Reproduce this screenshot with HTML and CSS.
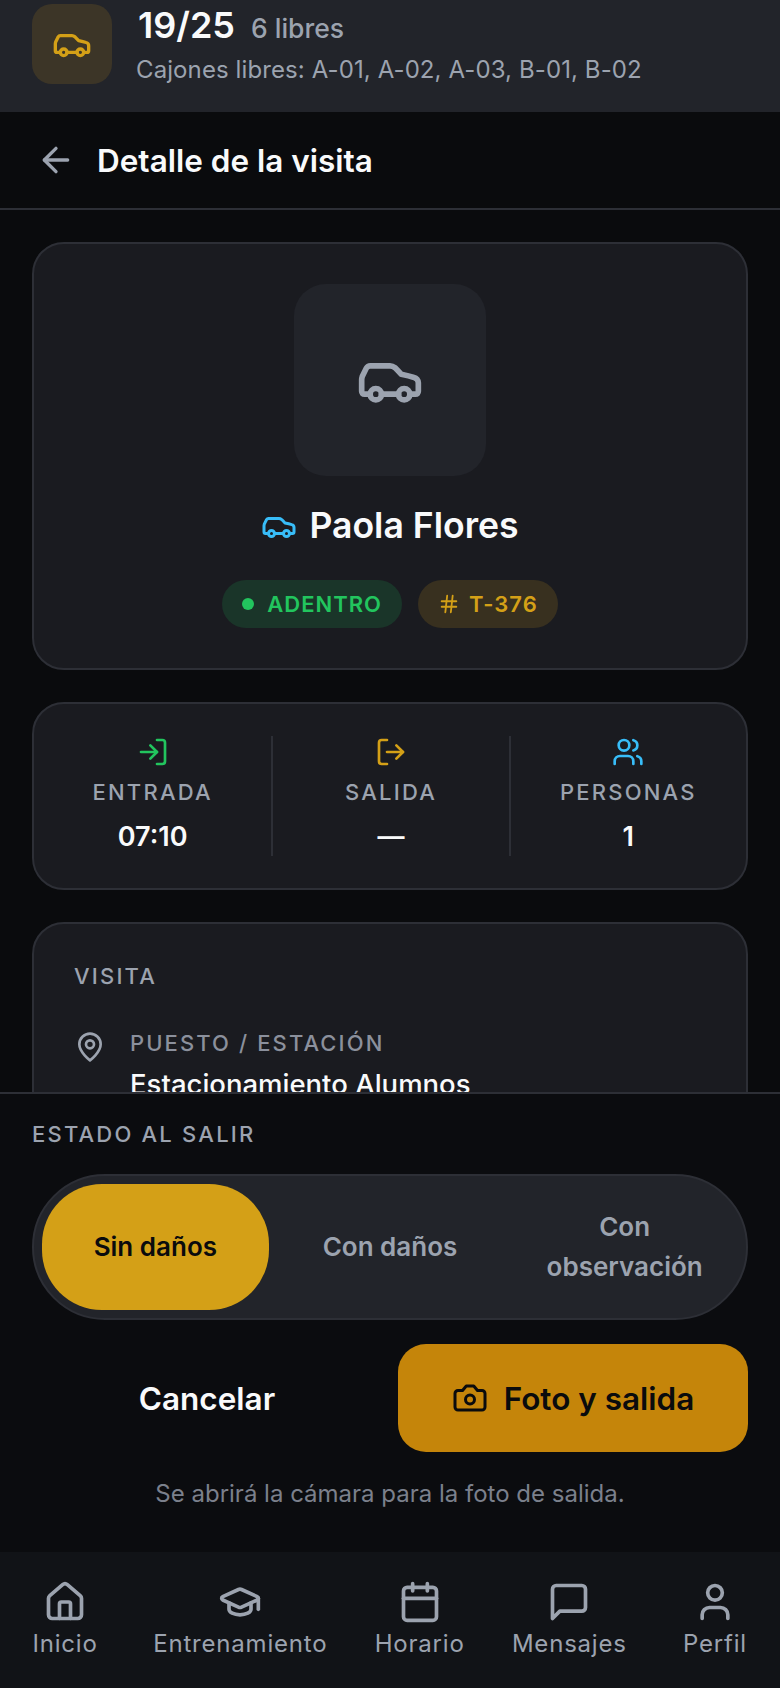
FILE: index.html
```
<!DOCTYPE html>
<html lang="es">

<head>
    <meta charset="UTF-8">
    <meta name="viewport" content="width=device-width, initial-scale=1.0">
    <title>Detalle de la visita</title>
    <link rel="stylesheet" href="styles.css">
</head>

<body>
    <svg class="sprites" width="0" height="0">
        <symbol id="i-car" viewBox="0 0 24 24"><path d="M19 17h2c.6 0 1-.4 1-1v-3c0-.9-.7-1.7-1.5-1.9C18.7 10.6 16 10 16 10s-1.3-1.4-2.2-2.3c-.5-.4-1.1-.7-1.8-.7H5c-.6 0-1.1.4-1.4.9l-1.4 2.9A3.7 3.7 0 0 0 2 12v4c0 .6.4 1 1 1h2"/><circle cx="7" cy="17" r="2"/><path d="M9 17h6"/><circle cx="17" cy="17" r="2"/></symbol>
        <symbol id="i-back" viewBox="0 0 24 24"><path d="m12 19-7-7 7-7"/><path d="M19 12H5"/></symbol>
        <symbol id="i-hash" viewBox="0 0 24 24"><path d="M4 9h16"/><path d="M4 15h16"/><path d="M10 3 8 21"/><path d="M16 3l-2 18"/></symbol>
        <symbol id="i-login" viewBox="0 0 24 24"><path d="M15 3h4a2 2 0 0 1 2 2v14a2 2 0 0 1-2 2h-4"/><path d="m10 17 5-5-5-5"/><path d="M15 12H3"/></symbol>
        <symbol id="i-logout" viewBox="0 0 24 24"><path d="M9 21H5a2 2 0 0 1-2-2V5a2 2 0 0 1 2-2h4"/><path d="m16 17 5-5-5-5"/><path d="M21 12H9"/></symbol>
        <symbol id="i-users" viewBox="0 0 24 24"><path d="M16 21v-2a4 4 0 0 0-4-4H6a4 4 0 0 0-4 4v2"/><circle cx="9" cy="7" r="4"/><path d="M22 21v-2a4 4 0 0 0-3-3.87"/><path d="M16 3.13a4 4 0 0 1 0 7.75"/></symbol>
        <symbol id="i-pin" viewBox="0 0 24 24"><path d="M20 10c0 6-8 12-8 12s-8-6-8-12a8 8 0 0 1 16 0Z"/><circle cx="12" cy="10" r="3"/></symbol>
        <symbol id="i-camera" viewBox="0 0 24 24"><path d="M14.5 4h-5L7 7H4a2 2 0 0 0-2 2v9a2 2 0 0 0 2 2h16a2 2 0 0 0 2-2V9a2 2 0 0 0-2-2h-3l-2.5-3z"/><circle cx="12" cy="13" r="3"/></symbol>
        <symbol id="i-home" viewBox="0 0 24 24"><path d="M15 21v-8a1 1 0 0 0-1-1h-4a1 1 0 0 0-1 1v8"/><path d="M3 10a2 2 0 0 1 .709-1.528l7-5.999a2 2 0 0 1 2.582 0l7 5.999A2 2 0 0 1 21 10v9a2 2 0 0 1-2 2H5a2 2 0 0 1-2-2z"/></symbol>
        <symbol id="i-cap" viewBox="0 0 24 24"><path d="M21.42 10.922a1 1 0 0 0-.019-1.838L12.83 5.18a2 2 0 0 0-1.66 0L2.6 9.08a1 1 0 0 0 0 1.832l8.57 3.908a2 2 0 0 0 1.66 0z"/><path d="M22 10v6"/><path d="M6 12.5V16a6 3 0 0 0 12 0v-3.5"/></symbol>
        <symbol id="i-calendar" viewBox="0 0 24 24"><path d="M8 2v4"/><path d="M16 2v4"/><rect x="3" y="4" width="18" height="18" rx="2"/><path d="M3 10h18"/></symbol>
        <symbol id="i-message" viewBox="0 0 24 24"><path d="M21 15a2 2 0 0 1-2 2H7l-4 4V5a2 2 0 0 1 2-2h14a2 2 0 0 1 2 2z"/></symbol>
        <symbol id="i-user" viewBox="0 0 24 24"><path d="M19 21v-2a4 4 0 0 0-4-4H9a4 4 0 0 0-4 4v2"/><circle cx="12" cy="7" r="4"/></symbol>
    </svg>

    <div class="app">
        <div class="parking-bar">
            <div class="parking-icon"><svg class="icon icon-40"><use href="#i-car"/></svg></div>
            <div class="parking-info">
                <div class="parking-count"><strong>19/25</strong><span>6 libres</span></div>
                <div class="parking-free">Cajones libres: A-01, A-02, A-03, B-01, B-02</div>
            </div>
        </div>

        <header class="page-header">
            <svg class="icon icon-40 back-icon"><use href="#i-back"/></svg>
            <h1>Detalle de la visita</h1>
        </header>

        <main class="content">
            <section class="card profile-card">
                <div class="avatar"><svg class="icon icon-68"><use href="#i-car"/></svg></div>
                <div class="visitor-name">
                    <svg class="icon icon-36 blue"><use href="#i-car"/></svg>
                    <span>Paola Flores</span>
                </div>
                <div class="pills">
                    <span class="pill pill-green"><i class="dot"></i>ADENTRO</span>
                    <span class="pill pill-amber"><svg class="icon icon-22"><use href="#i-hash"/></svg>T-376</span>
                </div>
            </section>

            <section class="card stats-card">
                <div class="stat">
                    <svg class="icon icon-32 green"><use href="#i-login"/></svg>
                    <div class="stat-label">ENTRADA</div>
                    <div class="stat-value">07:10</div>
                </div>
                <div class="stat">
                    <svg class="icon icon-32 amber"><use href="#i-logout"/></svg>
                    <div class="stat-label">SALIDA</div>
                    <div class="stat-value">—</div>
                </div>
                <div class="stat">
                    <svg class="icon icon-32 blue"><use href="#i-users"/></svg>
                    <div class="stat-label">PERSONAS</div>
                    <div class="stat-value">1</div>
                </div>
            </section>

            <section class="card visit-card">
                <div class="section-title">VISITA</div>
                <div class="info-row">
                    <svg class="icon icon-32 gray"><use href="#i-pin"/></svg>
                    <div>
                        <div class="info-label">PUESTO / ESTACIÓN</div>
                        <div class="info-value">Estacionamiento Alumnos</div>
                    </div>
                </div>
            </section>
        </main>

        <section class="exit-sheet">
            <div class="sheet-title">ESTADO AL SALIR</div>
            <div class="segment">
                <button class="segment-option active">Sin daños</button>
                <button class="segment-option">Con daños</button>
                <button class="segment-option">Con observación</button>
            </div>
            <div class="actions">
                <button class="btn btn-cancel">Cancelar</button>
                <button class="btn btn-primary"><svg class="icon icon-36"><use href="#i-camera"/></svg>Foto y salida</button>
            </div>
            <p class="hint">Se abrirá la cámara para la foto de salida.</p>
        </section>

        <nav class="tabbar">
            <a class="tab"><svg class="icon icon-44"><use href="#i-home"/></svg><span>Inicio</span></a>
            <a class="tab"><svg class="icon icon-44"><use href="#i-cap"/></svg><span>Entrenamiento</span></a>
            <a class="tab"><svg class="icon icon-44"><use href="#i-calendar"/></svg><span>Horario</span></a>
            <a class="tab"><svg class="icon icon-44"><use href="#i-message"/></svg><span>Mensajes</span></a>
            <a class="tab"><svg class="icon icon-44"><use href="#i-user"/></svg><span>Perfil</span></a>
        </nav>
    </div>
</body>

</html>
```

FILE: styles.css
```
* {
    box-sizing: border-box;
}

html, body {
    margin: 0;
    height: 100%;
}

body {
    font-family: Inter, "Noto Sans", sans-serif;
    background-color: #0a0b0d;
    color: #f9fafb;
}

.sprites {
    position: absolute;
}

.app {
    display: flex;
    flex-direction: column;
    height: 1688px;
    overflow: hidden;
}

.icon {
    display: block;
    flex: none;
    fill: none;
    stroke: currentColor;
    stroke-width: 2;
    stroke-linecap: round;
    stroke-linejoin: round;
}

.icon-22 { width: 22px; height: 22px; }
.icon-32 { width: 32px; height: 32px; }
.icon-36 { width: 36px; height: 36px; }
.icon-40 { width: 40px; height: 40px; }
.icon-44 { width: 44px; height: 44px; }
.icon-68 { width: 68px; height: 68px; }

.blue { color: #38bdf8; }
.green { color: #22c55e; }
.amber { color: #d4a017; }
.gray { color: #9ca3af; }

/* barra de cajones */
.parking-bar {
    display: flex;
    gap: 24px;
    height: 112px;
    padding: 4px 32px 0;
    background-color: #22242a;
    flex: none;
}

.parking-icon {
    display: flex;
    align-items: center;
    justify-content: center;
    width: 80px;
    height: 80px;
    border-radius: 20px;
    background-color: #3c3527;
    color: #d4a017;
}

.parking-count {
    display: flex;
    align-items: baseline;
    gap: 16px;
    margin-left: 2px;
    line-height: 42px;
}

.parking-count strong {
    font-size: 36px;
    font-weight: 600;
}

.parking-count span {
    font-size: 26.5px;
    font-weight: 500;
    color: #9ca3af;
}

.parking-free {
    margin-top: 6px;
    font-size: 24px;
    line-height: 30px;
    letter-spacing: 0.1px;
    color: #9ca3af;
}

/* cabecera */
.page-header {
    display: flex;
    align-items: center;
    gap: 21px;
    height: 98px;
    padding: 0 36px;
    border-bottom: 2px solid #2d2f36;
    flex: none;
}

.back-icon {
    color: #9ca3af;
}

.page-header h1 {
    margin: 0;
    font-size: 31.5px;
    font-weight: 600;
}

/* contenido */
.content {
    flex: 1;
    min-height: 0;
    overflow: hidden;
    padding: 32px 32px 0;
}

.card {
    background-color: #1a1b20;
    border: 2px solid #2d2f36;
    border-radius: 32px;
    margin-bottom: 32px;
}

.profile-card {
    display: flex;
    flex-direction: column;
    align-items: center;
    padding: 40px 0;
}

.avatar {
    display: flex;
    align-items: center;
    justify-content: center;
    width: 192px;
    height: 192px;
    border-radius: 32px;
    background-color: #22242a;
    color: #9ca3af;
}

.visitor-name {
    display: flex;
    align-items: center;
    gap: 12px;
    margin-top: 28px;
    font-size: 35.6px;
    line-height: 44px;
    font-weight: 600;
}

.pills {
    display: flex;
    gap: 16px;
    margin-top: 32px;
}

.pill {
    display: flex;
    align-items: center;
    gap: 13px;
    height: 48px;
    padding: 0 20px;
    border-radius: 24px;
    font-size: 22px;
    font-weight: 600;
    letter-spacing: 1px;
}

.pill-green {
    background-color: #1a3529;
    color: #22c55e;
}

.pill-amber {
    gap: 9px;
    background-color: #38301f;
    color: #d4a017;
}

.dot {
    width: 12px;
    height: 12px;
    border-radius: 50%;
    background-color: #22c55e;
}

.stats-card {
    display: grid;
    grid-template-columns: repeat(3, 1fr);
    padding: 32px 0;
}

.stat {
    display: flex;
    flex-direction: column;
    align-items: center;
    height: 120px;
    border-left: 2px solid #2d2f36;
}

.stat:first-child {
    border-left: none;
}

.stat-label {
    margin-top: 12px;
    font-size: 22px;
    line-height: 24px;
    font-weight: 500;
    letter-spacing: 2.2px;
    color: #9ca3af;
}

.stat-value {
    margin-top: 16px;
    font-size: 27px;
    line-height: 34px;
    font-weight: 600;
}

.visit-card {
    padding: 40px;
}

.section-title {
    font-size: 22px;
    line-height: 24px;
    font-weight: 500;
    letter-spacing: 2.2px;
    color: #9ca3af;
}

.info-row {
    display: flex;
    gap: 24px;
    margin-top: 43px;
}

.info-label {
    font-size: 22px;
    line-height: 24px;
    font-weight: 500;
    letter-spacing: 2.1px;
    color: #8b909c;
}

.info-value {
    margin-top: 11px;
    font-size: 27.5px;
    line-height: 36px;
    font-weight: 500;
}

/* panel inferior */
.exit-sheet {
    flex: none;
    height: 460px;
    padding: 28px 32px 0;
    background-color: #0b0c0f;
    border-top: 2px solid #2d2f36;
}

.sheet-title {
    font-size: 22px;
    line-height: 24px;
    font-weight: 500;
    letter-spacing: 2.2px;
    color: #9ca3af;
}

.segment {
    display: grid;
    grid-template-columns: repeat(3, 1fr);
    gap: 8px;
    height: 146px;
    margin-top: 28px;
    padding: 8px;
    background-color: #22242a;
    border: 2px solid #2d2f36;
    border-radius: 73px;
}

.segment-option {
    padding: 0 8px;
    border: none;
    border-radius: 60px;
    background: none;
    color: #9ca3af;
    font-family: inherit;
    font-size: 26px;
    line-height: 40px;
    font-weight: 600;
}

.segment-option.active {
    background-color: #d4a017;
    color: #0a0b0d;
}

.actions {
    display: grid;
    grid-template-columns: 1fr 1fr;
    gap: 16px;
    margin-top: 24px;
}

.btn {
    display: flex;
    align-items: center;
    justify-content: center;
    gap: 16px;
    height: 108px;
    border: none;
    border-radius: 28px;
    font-family: inherit;
    font-size: 31.5px;
    font-weight: 600;
}

.btn-cancel {
    background: none;
    color: #f9fafb;
}

.btn-primary {
    background-color: #c5850a;
    color: #0a0b0d;
}

.hint {
    margin: 27px 0 0;
    text-align: center;
    font-size: 24px;
    line-height: 30px;
    color: #7b808c;
}

/* navegacion */
.tabbar {
    display: flex;
    justify-content: space-between;
    flex: none;
    height: 136px;
    padding: 28px 24px 0;
    background-color: #111317;
}

.tab {
    display: flex;
    flex-direction: column;
    align-items: center;
    min-width: 82px;
    color: #9ca3af;
}

.tab span {
    margin-top: 5px;
    font-size: 24px;
    line-height: 30px;
    letter-spacing: 0.8px;
}
```
